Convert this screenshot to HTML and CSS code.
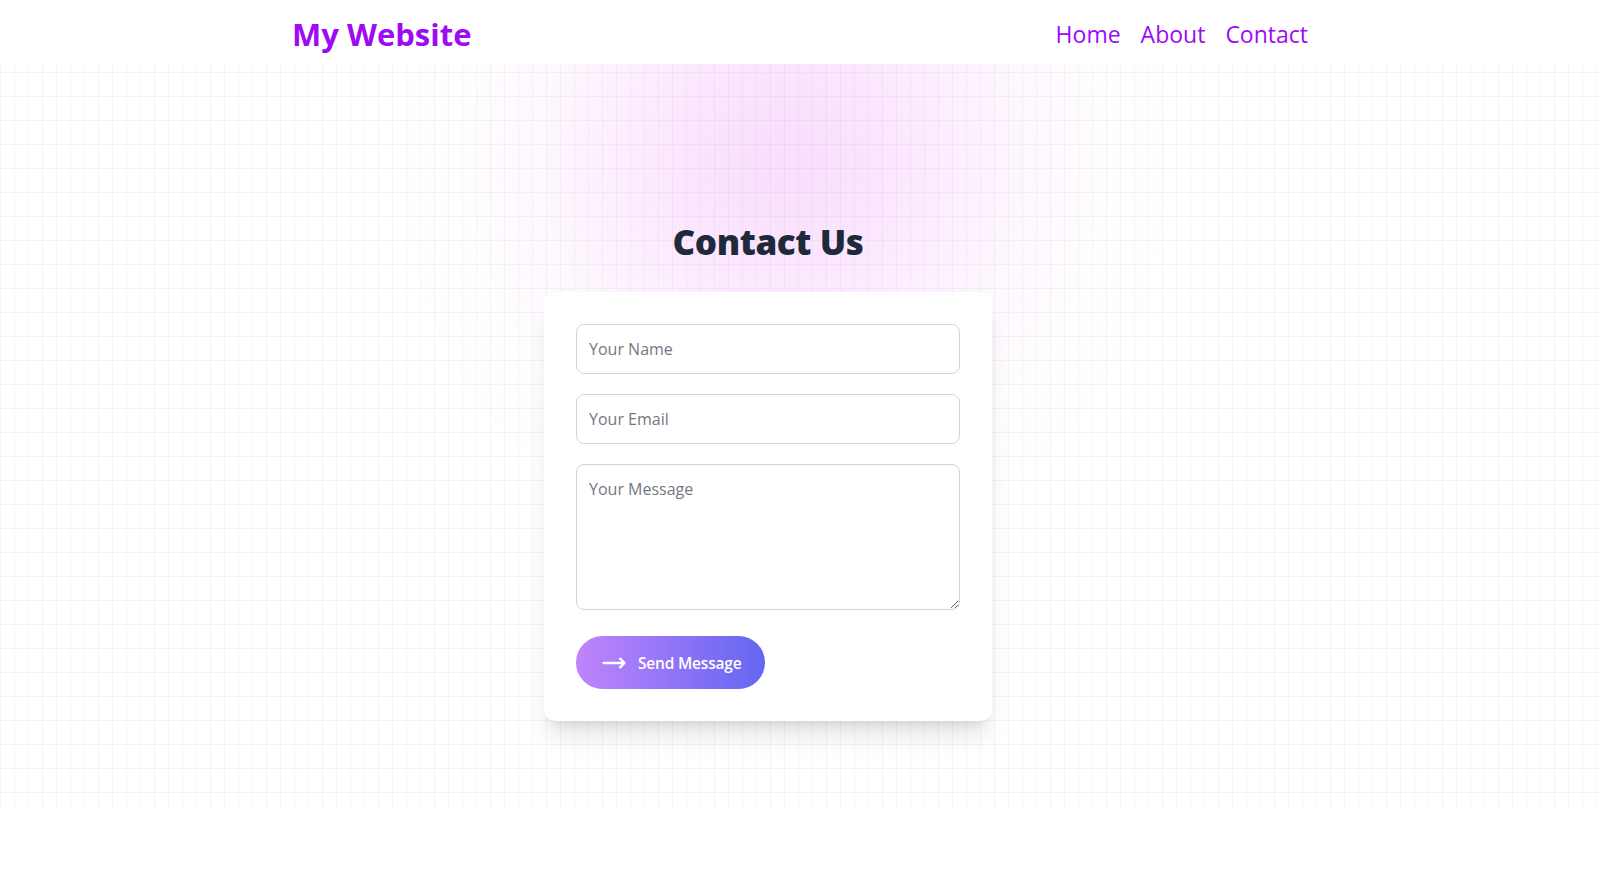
FILE: index.html
```html
<!DOCTYPE html>
<html lang="en">
<head>
<meta charset="utf-8">
<title>Contact Us - My Website</title>
<link rel="stylesheet" href="styles.css">
</head>
<body>
<div class="page">
  <div class="blob"></div>
  <header class="site-header">
    <div class="header-inner">
      <a class="logo" href="#">My Website</a>
      <nav class="nav">
        <a href="#">Home</a>
        <a href="#">About</a>
        <a href="#">Contact</a>
      </nav>
    </div>
  </header>
  <main class="main">
    <h1 class="title">Contact Us</h1>
    <form class="card">
      <input class="field" type="text" placeholder="Your Name">
      <input class="field" type="email" placeholder="Your Email">
      <textarea class="field area" rows="5" placeholder="Your Message"></textarea>
      <button class="send" type="button">
        <svg class="arrow" viewBox="0 0 24 24" fill="none" stroke="currentColor" stroke-width="1.8" stroke-linecap="round" stroke-linejoin="round"><path d="M17.25 8.25 21 12m0 0-3.75 3.75M21 12H3"/></svg>
        <span>Send Message</span>
      </button>
    </form>
  </main>
</div>
</body>
</html>
```

FILE: styles.css
```css
* { box-sizing: border-box; }
html, body { margin: 0; padding: 0; background: #fff; }
body {
  font-family: "Open Sans", "Noto Sans", "Liberation Sans", sans-serif;
  color: #1e293b;
}
.page {
  position: relative;
  overflow: hidden;
  background-color: #fff;
  background-image:
    linear-gradient(to right, #80808014 1px, transparent 1px),
    linear-gradient(to bottom, #80808014 1px, transparent 1px);
  background-size: 14px 24px;
}
.blob {
  position: absolute;
  top: -20px;
  left: 0;
  right: 30px;
  margin: auto;
  width: 360px;
  height: 360px;
  border-radius: 50%;
  background: #e879f9;
  opacity: 0.3;
  filter: blur(110px);
  z-index: 0;
}
.site-header {
  position: relative;
  z-index: 2;
  background: #fff;
  height: 64px;
}
.header-inner {
  width: 1024px;
  margin: 0 auto;
  padding: 0 4px 0 4px;
  height: 100%;
  display: flex;
  align-items: center;
  justify-content: space-between;
}
.logo {
  font-size: 31px;
  font-weight: 700;
  color: #9d0af4;
  text-decoration: none;
  line-height: 36px;
  margin-top: 4px;
}
.nav {
  display: flex;
  gap: 20px;
  margin-top: 4px;
}
.nav a {
  font-size: 23px;
  line-height: 32px;
  color: #9d0af4;
  text-decoration: none;
}
.main {
  position: relative;
  z-index: 1;
  width: 1536px;
  padding: 158px 0 90px;
  display: flex;
  flex-direction: column;
  align-items: center;
}
.title {
  margin: 0 0 30px;
  font-size: 35px;
  line-height: 40px;
  font-weight: 800;
  letter-spacing: -0.4px;
  color: #1e293b;
}
.card {
  width: 448px;
  background: #fff;
  border-radius: 12px;
  padding: 32px;
  box-shadow: 0 20px 25px -5px rgba(0,0,0,0.1), 0 8px 10px -6px rgba(0,0,0,0.1);
  display: flex;
  flex-direction: column;
  align-items: flex-start;
}
.field {
  display: block;
  width: 100%;
  height: 50px;
  margin: 0 0 20px;
  padding: 12px;
  border: 1px solid #d1d5db;
  border-radius: 8px;
  font-family: inherit;
  font-size: 16px;
  line-height: 24px;
  color: #111827;
  background: #fff;
  outline: none;
}
.field::placeholder { color: #737880; }
.area {
  height: 146px;
  resize: vertical;
  margin-bottom: 26px;
}
.send {
  display: flex;
  align-items: center;
  gap: 10px;
  height: 53px;
  padding: 0 24px 0 24px;
  border: none;
  border-radius: 9999px;
  background: linear-gradient(to right, #c084fc, #6366f1);
  color: #fff;
  font-family: inherit;
  font-size: 15.5px;
  letter-spacing: -0.2px;
  font-weight: 600;
  cursor: pointer;
}
.arrow { width: 28px; height: 28px; display: block; stroke-width: 2; }
```
